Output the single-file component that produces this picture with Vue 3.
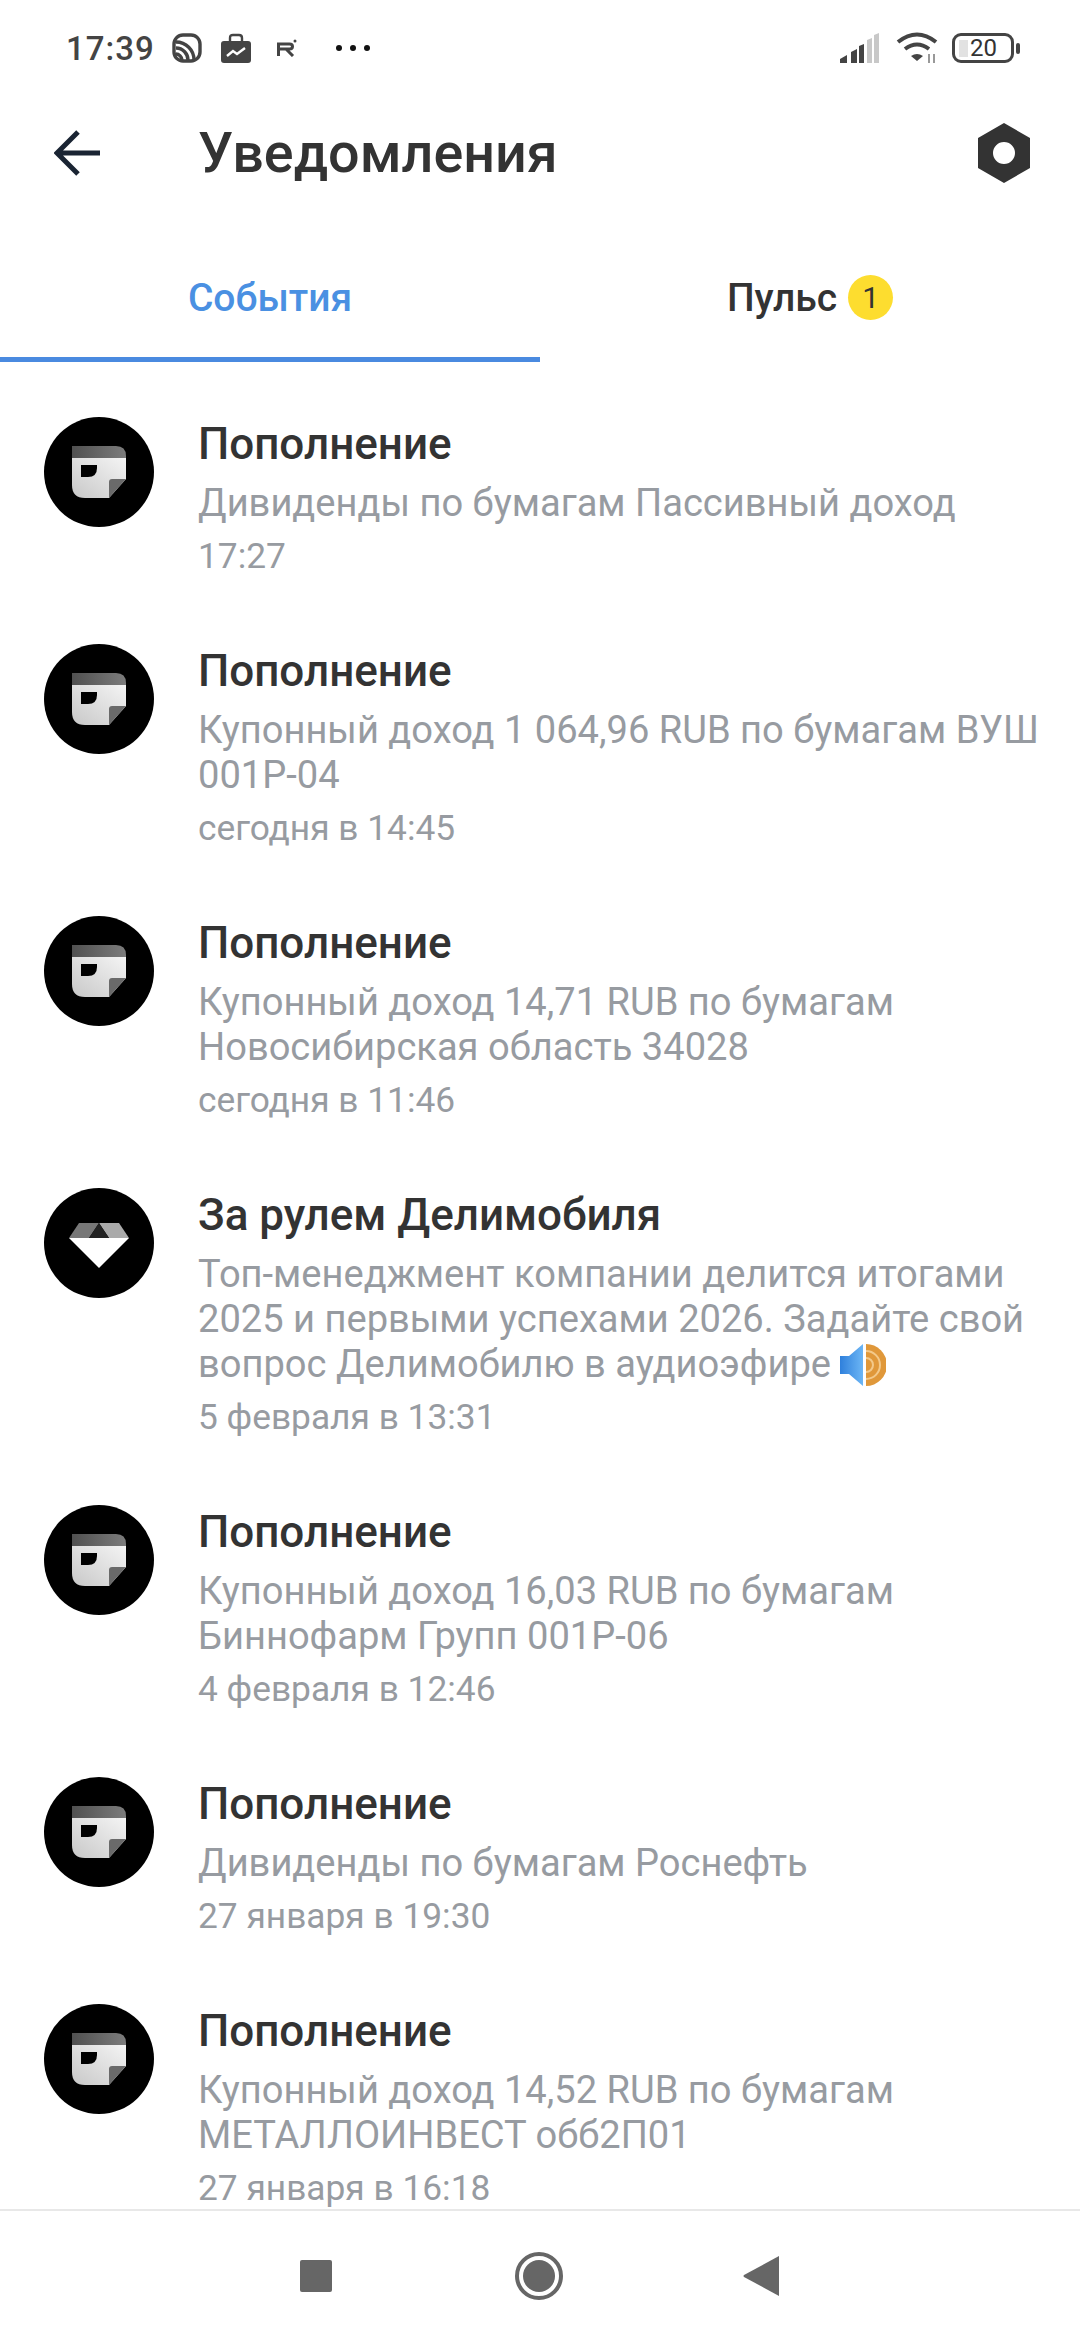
<script setup>
const items = [
  { icon: "card", title: "Пополнение", text: "Дивиденды по бумагам Пассивный доход", time: "17:27" },
  { icon: "card", title: "Пополнение", text: "Купонный доход 1 064,96 RUB по бумагам ВУШ 001Р-04", time: "сегодня в 14:45" },
  { icon: "card", title: "Пополнение", text: "Купонный доход 14,71 RUB по бумагам Новосибирская область 34028", time: "сегодня в 11:46" },
  { icon: "gem", title: "За рулем Делимобиля", text: "Топ-менеджмент компании делится итогами 2025 и первыми успехами 2026. Задайте свой вопрос Делимобилю в аудиоэфире", time: "5 февраля в 13:31", sound: true },
  { icon: "card", title: "Пополнение", text: "Купонный доход 16,03 RUB по бумагам Биннофарм Групп 001Р-06", time: "4 февраля в 12:46" },
  { icon: "card", title: "Пополнение", text: "Дивиденды по бумагам Роснефть", time: "27 января в 19:30" },
  { icon: "card", title: "Пополнение", text: "Купонный доход 14,52 RUB по бумагам МЕТАЛЛОИНВЕСТ обб2П01", time: "27 января в 16:18" },
]
</script>

<template>
  <div class="page">
    <div class="status">
      <span class="clock">17:39</span>
      <svg class="st-rss" width="30" height="30" viewBox="0 0 30 30" fill="none" stroke="#444" stroke-width="3.4">
        <rect x="2" y="2" width="26" height="26" rx="9" />
        <path d="M4 9c10 0 18 8 18 18M4 15c7 0 12 6 12 12M4 21c3 0 6 3 6 6" />
      </svg>
      <svg class="st-case" width="30" height="30" viewBox="0 0 30 30">
        <path d="M9 8V5q0-3 3-3h6q3 0 3 3v3" fill="none" stroke="#444" stroke-width="2.4" />
        <rect y="8" width="30" height="22" rx="3" fill="#444" />
        <path d="M6 23l6-5 4 3 8-6" fill="none" stroke="#fff" stroke-width="2.4" />
      </svg>
      <svg class="st-r" width="20" height="18" viewBox="0 0 20 18" fill="none" stroke="#444" stroke-width="3">
        <path d="M1.500 17V5h11q3 0 3 2.500t-3 2.500H1.500M9 10l7 7" />
        <circle cx="18" cy="2" r="1.500" fill="#444" stroke="none" />
      </svg>
      <span class="dots"><i></i><i></i><i></i></span>
      <span class="st-space"></span>
      <svg width="40" height="30" viewBox="0 0 40 30">
        <path d="M0 30v-4l7-4v8z" fill="#444" />
        <path d="M11 30V19l6-3v14z" fill="#444" />
        <path d="M19 30V13l5-2v19z" fill="#444" />
        <path d="M27 30V7l5-2v25z" fill="#c8c8c8" />
        <path d="M34 30V2l5-2v30z" fill="#c8c8c8" />
      </svg>
      <svg class="st-wifi" width="44" height="32" viewBox="0 0 44 32" fill="none" stroke="#444" stroke-width="4">
        <path d="M2 10q19-15 38 0M9 17q12-9 24 0" />
        <path d="M15 24q6-4 12 0l-6 5z" fill="#444" stroke="none" />
        <path d="M33 22v9M38 22v9" stroke="#999" stroke-width="2" />
      </svg>
      <div class="battery"><span class="bat-level"></span><span class="bat-num">20</span></div>
      <span class="bat-tip"></span>
    </div>

    <header class="head">
      <svg width="46" height="46" viewBox="0 0 46 46" fill="none" stroke="#1a2433" stroke-width="5">
        <path d="M24 2L3 23l21 21M3 23h43" />
      </svg>
      <h1>Уведомления</h1>
      <svg class="nut" width="54" height="60" viewBox="0 0 54 60">
        <path fill-rule="evenodd" d="M27 0l26 15v30L27 60 1 45V15zM27 19a11 11 0 100 22 11 11 0 000-22z" fill="#333" />
      </svg>
    </header>

    <nav class="tabs">
      <div class="tab active">События</div>
      <div class="tab">Пульс <span class="badge">1</span></div>
    </nav>

    <main class="list">
      <div v-for="(item, i) in items" :key="i" class="item">
        <svg v-if="item.icon === 'card'" class="avatar" width="110" height="110" viewBox="0 0 110 110">
          <defs>
            <linearGradient :id="`top${i}`" x1="0" y1="0" x2="1" y2="0">
              <stop offset="0" stop-color="#505050" />
              <stop offset="1" stop-color="#7c7c7c" />
            </linearGradient>
            <linearGradient :id="`body${i}`" x1="0" y1="1" x2="1" y2="0">
              <stop offset="0" stop-color="#c8c8c8" />
              <stop offset="1" stop-color="#f4f4f4" />
            </linearGradient>
          </defs>
          <circle cx="55" cy="55" r="55" fill="#000" />
          <path d="M28 29h44q10 0 10 10v2H28z" :fill="`url(#top${i})`" />
          <path d="M28 41h54v21L65 81H41q-13 0-13-13z" :fill="`url(#body${i})`" />
          <path d="M82 62H68q-3 0-3 3v16z" fill="#6a6a6a" />
          <path d="M37 48h16v3q0 9-9 9h-7z" fill="#000" />
        </svg>
        <svg v-else class="avatar" width="110" height="110" viewBox="0 0 110 110">
          <circle cx="55" cy="55" r="55" fill="#000" />
          <path d="M35 35h20L45 50H25z" fill="#777" />
          <path d="M55 35h20l10 15H65z" fill="#aaa" />
          <path d="M55 35l10 15H45z" fill="#222" />
          <path d="M25 50h60L55 80z" fill="#fff" />
        </svg>
        <div class="body">
          <div class="title">{{ item.title }}</div>
          <div class="text">
            {{ item.text }}
            <svg v-if="item.sound" class="sound" width="46" height="44" viewBox="0 0 46 44">
              <defs>
                <linearGradient id="spk" x1="0" y1="0" x2="1" y2="0">
                  <stop offset="0" stop-color="#2f80dc" />
                  <stop offset="1" stop-color="#6cb6f5" />
                </linearGradient>
              </defs>
              <path d="M0 13h9L23 1v42L9 31H0z" fill="url(#spk)" />
              <path d="M26 1a21 21 0 010 42z" fill="#e0983a" />
              <path d="M26 8a14 14 0 010 28M26 15a7 7 0 010 14" fill="none" stroke="#f3c98a" stroke-width="2" />
            </svg>
          </div>
          <div class="time">{{ item.time }}</div>
        </div>
      </div>
    </main>

    <footer class="nav">
      <span class="nav-square"></span>
      <span class="nav-home"><i></i></span>
      <svg width="36" height="40" viewBox="0 0 36 40"><path d="M36 0v40L1 21q-1-1 0-2z" fill="#666" /></svg>
    </footer>
  </div>
</template>

<style scoped>
.page {
  width: 1080px;
  height: 2340px;
  display: flex;
  flex-direction: column;
  overflow: hidden;
  background: #fff;
  font-family: Roboto, "Noto Sans", sans-serif;
}

.status {
  height: 96px;
  flex: none;
  display: flex;
  align-items: center;
  padding: 0 60px 0 66px;
}

.clock {
  font-size: 33px;
  font-weight: 500;
  color: #444;
  letter-spacing: 1px;
}

.st-rss { margin-left: 17px; }
.st-case { margin-left: 19px; }
.st-r { margin-left: 26px; }

.dots {
  display: flex;
  gap: 8px;
  margin-left: 39px;
}

.dots i {
  width: 6px;
  height: 6px;
  border-radius: 50%;
  background: #111;
}

.st-space { flex: 1; }
.st-wifi { margin-left: 16px; }

.battery {
  width: 62px;
  height: 30px;
  margin-left: 12px;
  box-sizing: border-box;
  border: 3.5px solid #444;
  border-radius: 9px;
  display: flex;
  align-items: center;
  padding-left: 4px;
}

.bat-level {
  width: 9px;
  height: 17px;
  background: #e2e2e2;
}

.bat-num {
  font-size: 24px;
  color: #333;
  margin-left: 2px;
}

.bat-tip {
  width: 4px;
  height: 11px;
  margin-left: 2px;
  border-radius: 2px;
  background: #444;
}

.head {
  height: 114px;
  flex: none;
  display: flex;
  align-items: center;
  padding: 0 49px 0 54px;
}

.head h1 {
  flex: 1;
  margin: 0 0 0 98px;
  font-size: 55.7px;
  font-weight: 500;
  color: #333;
}

.tabs {
  height: 152px;
  flex: none;
  display: flex;
  box-sizing: border-box;
  padding-top: 28px;
}

.tab {
  flex: 1;
  display: flex;
  align-items: center;
  justify-content: center;
  gap: 11px;
  font-size: 39px;
  font-weight: 500;
  color: #333;
  border-bottom: 5px solid transparent;
}

.tab.active {
  color: #4a90e2;
  border-bottom-color: #4a8ae0;
}

.badge {
  width: 45px;
  height: 45px;
  border-radius: 50%;
  background: #fddd2f;
  display: flex;
  align-items: center;
  justify-content: center;
  font-size: 30px;
  font-weight: 400;
}

.list {
  flex: 1;
  min-height: 0;
  overflow: hidden;
  padding-top: 55px;
}

.item {
  display: flex;
  padding: 0 20px 65px 44px;
}

.avatar {
  flex: none;
}

.body {
  margin-left: 44px;
  min-width: 0;
}

.title {
  font-size: 44px;
  font-weight: 500;
  line-height: 54px;
  color: #333;
}

.text {
  margin-top: 10px;
  font-size: 38.1px;
  line-height: 45px;
  color: #979ba1;
}

.sound {
  vertical-align: -10px;
}

.time {
  margin-top: 8px;
  font-size: 35.3px;
  line-height: 45px;
  color: #979ba1;
}

.nav {
  height: 131px;
  flex: none;
  display: flex;
  align-items: center;
  justify-content: space-between;
  box-sizing: border-box;
  padding: 0 301px 0 300px;
  border-top: 2px solid #e8e8e8;
}

.nav-square {
  width: 32px;
  height: 32px;
  border-radius: 2px;
  background: #666;
}

.nav-home {
  width: 48px;
  height: 48px;
  margin-left: 3px;
  box-sizing: border-box;
  border: 4px solid #666;
  border-radius: 50%;
  padding: 4px;
}

.nav-home i {
  display: block;
  width: 100%;
  height: 100%;
  border-radius: 50%;
  background: #666;
}
</style>

<style>
html, body {
  margin: 0;
  background: #fff;
}
</style>
